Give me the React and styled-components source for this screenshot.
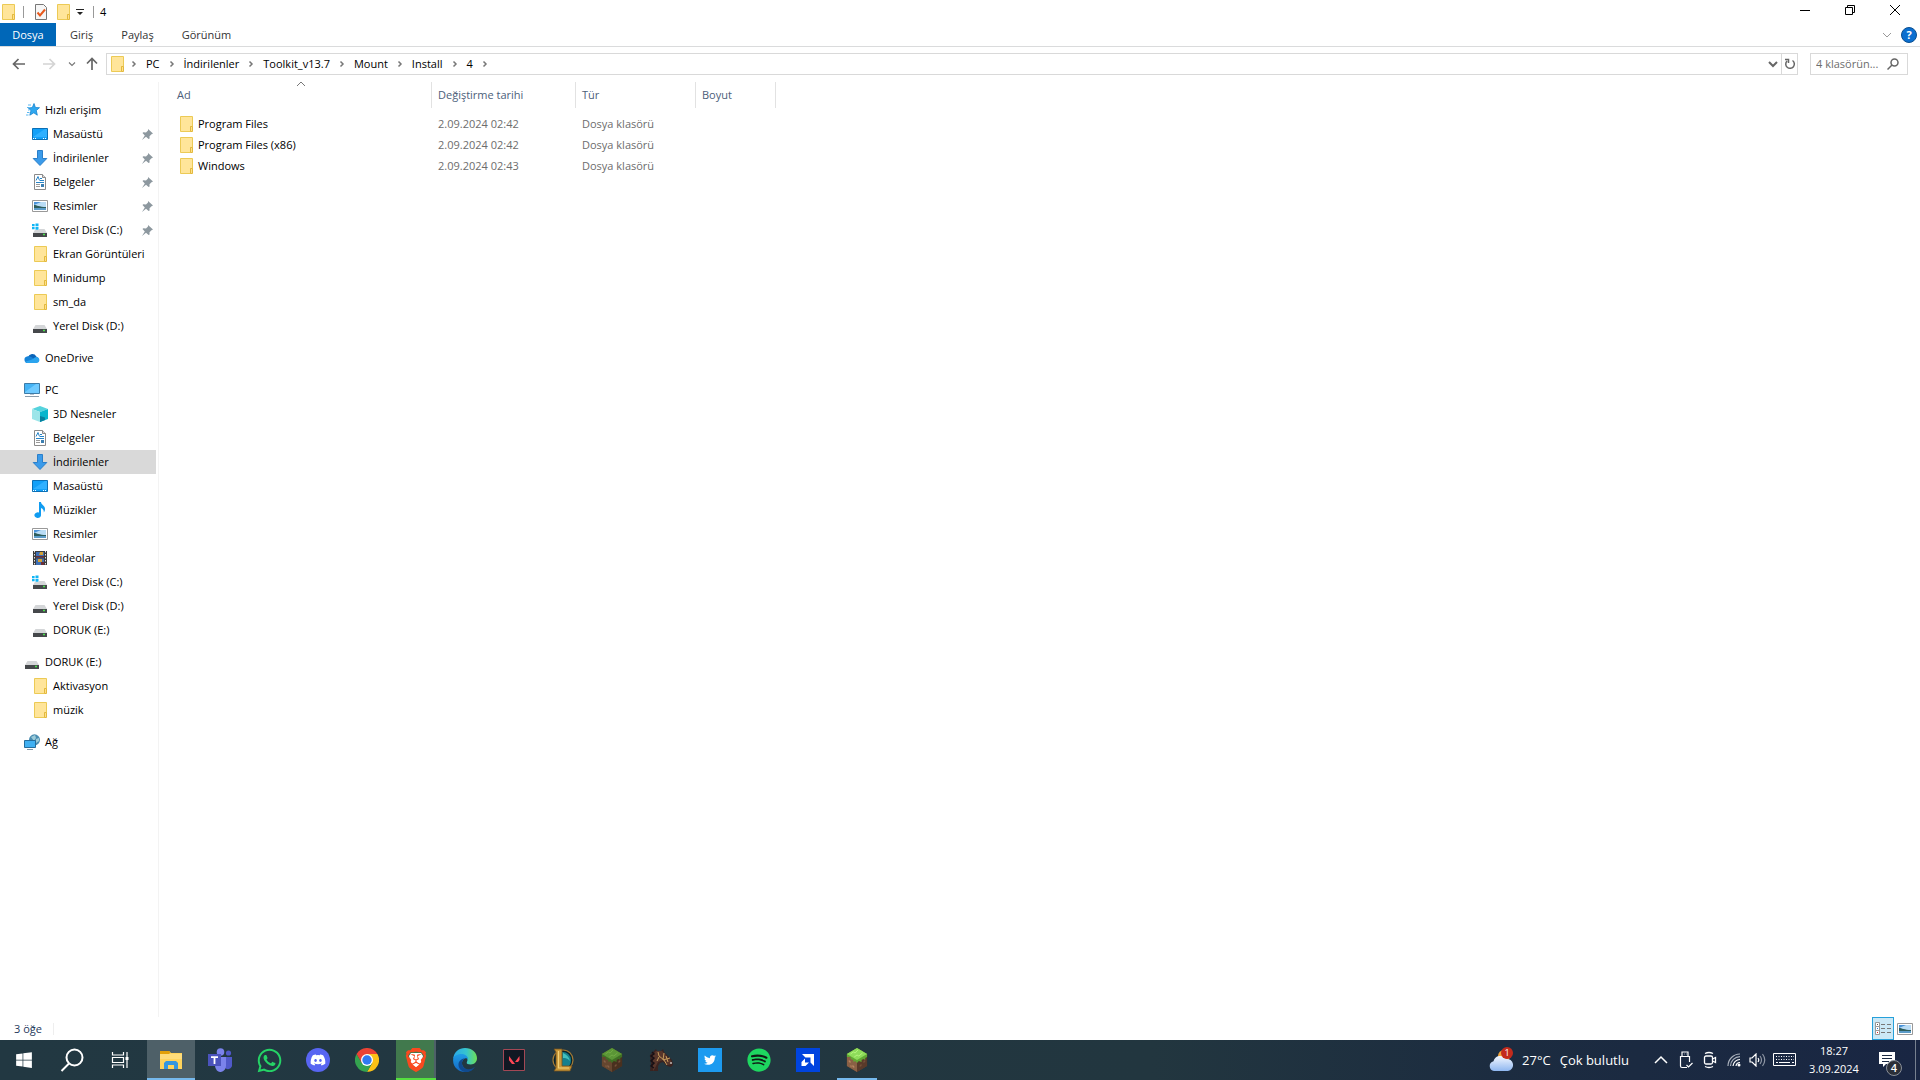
import React from "react";
import styled, { createGlobalStyle } from "styled-components";
import { FaWindows, FaWhatsapp, FaDiscord, FaSpotify, FaTwitter } from "react-icons/fa";
import { SiBrave } from "react-icons/si";

/* ---------- file icons ---------- */

const FolderIcon = () => (
  <svg width="16" height="16" viewBox="0 0 16 16">
    <path d="M2.5.5h12v10h-1.800v5H2.500z" fill="#ffe59a" stroke="#ecca55" />
    <path d="M12.500 10.500h2v5h-2z" fill="#ffe08a" stroke="#e3b93e" />
  </svg>
);

const StarIcon = () => (
  <svg width="16" height="16" viewBox="0 0 16 16">
    <path d="M10 1.500l1.400 4 4.100.2-3.200 2.800 1 4.700-3.500-2.400-4 2.400L7 8.600 4.300 6l4-.4z" fill="#2fa8f0" stroke="#1583cf" strokeWidth=".8" />
    <path d="M4 3h3M3 5.500h2M4 8h1.500M3 10.500h2.500M2 13h2.500" stroke="#5cb8f0" />
  </svg>
);

const DesktopIcon = () => (
  <svg width="16" height="16" viewBox="0 0 16 16">
    <path d="M.5 2.500h15v11H.5z" fill="#12a0f8" stroke="#0b6fb5" />
    <path d="M1 11L13 3h2v8z" fill="#2fb0ff" />
    <path d="M1 12.500h1M3 12.500h1M11 12.500h1M13 12.500h1" stroke="#fff" />
  </svg>
);

const DownloadIcon = () => (
  <svg width="16" height="16" viewBox="0 0 16 16">
    <path d="M5.500.5h5v8h4.300L8 15.500 1.200 8.500h4.300z" fill="#3b9bea" stroke="#2a7fca" />
  </svg>
);

const DocumentIcon = () => (
  <svg width="16" height="16" viewBox="0 0 16 16">
    <path d="M2.500.5h8l3 3v12h-11z" fill="#fff" stroke="#8a8a8a" />
    <path d="M10.500.5v3h3" fill="#ddd" stroke="#8a8a8a" />
    <path d="M4 6.500l2-4 1.500 4M8 4.500h2M8 6.500h4M4 8.500h8" stroke="#2784c7" fill="none" />
    <path d="M4 10.500h4M4 12.500h4" stroke="#999" />
    <path d="M9 10h3v3H9z" fill="#3c7fb1" />
  </svg>
);

const PictureIcon = () => (
  <svg width="16" height="16" viewBox="0 0 16 16">
    <path d="M.5 2.500h15v11H.5z" fill="#fff" stroke="#999" />
    <path d="M2 4h12v8H2z" fill="#b9dcf5" />
    <path d="M2 4h7L2 7z" fill="#4a92d8" />
    <path d="M2 7c3 0 5 2 12 2v1H2z" fill="#2d5d5c" />
    <path d="M2 10h12v2H2z" fill="#5b9bc8" />
  </svg>
);

const DriveIcon = ({ system }) => (
  <svg width="16" height="16" viewBox="0 0 16 16">
    <path d="M3.500 7h9L15 11H1z" fill="#d4d6d8" />
    <path d="M1 11h14v4H1z" fill="#45484b" />
    <path d="M11 12.500h2" stroke="#4be04b" strokeWidth="1.500" />
    {system && (
      <>
        <path d="M0 1h7v7H0z" fill="#fff" />
        <path d="M0 2h2.600v2.200H0zM3.500 1.500h3v2.700h-3zM0 5h2.600v2.200H0zM3.500 5h3v2.700h-3z" fill="#11b5f5" />
      </>
    )}
  </svg>
);

const SystemDriveIcon = () => <DriveIcon system />;

const CloudIcon = () => (
  <svg width="16" height="16" viewBox="0 0 16 16">
    <path d="M4 7a4.500 4.500 0 0 1 8.300-.6A3.500 3.500 0 0 1 12 13H4z" fill="#0a63b8" />
    <path d="M3 6.500c3-1 4.500 1 9 3.500l-8 3a3.300 3.300 0 0 1-1-6.500z" fill="#1683d8" />
    <path d="M8 9.500c2-1 3-2.600 5-2.400a3 3 0 0 1 0 5.900H3.500c-1 0-2-.5-2.500-1.200z" fill="#2ba4ee" />
  </svg>
);

const PcIcon = () => (
  <svg width="16" height="16" viewBox="0 0 16 16">
    <path d="M.5 1.500h15v10H.5z" fill="#45b3f5" stroke="#3d7ca8" />
    <path d="M1 10L12 2h3v9H1z" fill="#6fcaff" />
    <path d="M6 12h4v1H6z" fill="#b5c3cf" />
    <path d="M1 14.500h14" stroke="#8b9cab" />
  </svg>
);

const CubeIcon = () => (
  <svg width="16" height="16" viewBox="0 0 16 16">
    <path d="M0 3l8-3 8 3-8 3z" fill="#55d3dd" />
    <path d="M0 3l8 3v10l-8-3z" fill="#9ce5e9" />
    <path d="M16 3L8 6v10l8-3z" fill="#08b5cd" />
    <path d="M8 10l5 1.500v2.500l-5 2z" fill="#087f9d" />
  </svg>
);

const MusicIcon = () => (
  <svg width="16" height="16" viewBox="0 0 16 16">
    <path d="M7 0h2c0 3 4 3.500 4 7 0 1.500-.5 2.500-1.200 3.500.2-2.500-1-3.700-2.800-4.500v7a3.300 2.800 0 1 1-2-2.400z" fill="#109cf1" />
  </svg>
);

const VideoIcon = () => (
  <svg width="16" height="16" viewBox="0 0 16 16">
    <path d="M1 1h14v14H1z" fill="#3b3b3b" />
    <path d="M2.500 1v14M13.500 1v14" stroke="#e5e5e5" strokeDasharray="1.500 1.500" />
    <path d="M4 2h8v5.500H4zM4 8.500h8V15H4z" fill="#3e6fb4" />
    <path d="M8 2h3v3H7zM6 9h4v3H6z" fill="#d5a235" />
    <path d="M4 6h8v1.500H4zM9 12h3v3H9z" fill="#6b2f38" />
  </svg>
);

const NetworkIcon = () => (
  <svg width="16" height="16" viewBox="0 0 16 16">
    <circle cx="10.500" cy="5.800" r="5.500" fill="#4a8db1" />
    <path d="M7 3l4-2 1 3-2 3zM12 5l3-1v3l-3 2z" fill="#9ccbd8" />
    <path d="M.5 6.500h11v7H.5z" fill="#40b0f2" stroke="#246d9c" />
    <path d="M3 15.500h6" stroke="#7f97a8" />
  </svg>
);

const PinIcon = () => (
  <svg width="11" height="11" viewBox="0 0 11 11">
    <path d="M6 0l5 4.500-1.500.7-2 2 .1 2.300-1 .5L4 7.800 0 11l2.800-4.500L.5 4l.8-.8 2.700.2 2-2z" fill="#8d989f" />
  </svg>
);

const Chevron = ({ dir = "right", size = 8, color = "#777", weight = 1.5 }) => {
  const paths = { right: "M2.500 1.500L5 4 2.500 6.500", down: "M0 2l4 4 4-4", up: "M0 6l4-4 4 4" };
  return (
    <svg width={size} height={size} viewBox="0 0 8 8" overflow="visible">
      <path d={paths[dir]} fill="none" stroke={color} strokeWidth={weight} />
    </svg>
  );
};

const ArrowIcon = ({ turn = 0, color = "#666" }) => (
  <svg width="14" height="14" viewBox="0 0 14 14">
    <path d="M13 7H2M6.500 2L1.500 7l5 5" transform={`rotate(${turn} 7 7)`} fill="none" stroke={color} strokeWidth="1.700" />
  </svg>
);

/* ---------- taskbar icons ---------- */

const SearchIcon = () => (
  <svg width="24" height="24" viewBox="0 0 24 24" fill="none" stroke="#fff" strokeWidth="2">
    <circle cx="14.500" cy="9.500" r="8" />
    <path d="M9 15.500L1.500 23" />
  </svg>
);

const TaskViewIcon = () => (
  <svg width="18" height="18" viewBox="0 0 18 18" fill="none" stroke="#fff" strokeWidth="1.200">
    <path d="M1.500 1v3h11V1M1.500 17v-3h11v3M1.500 6.500h11v5h-11zM16 1v16" />
    <path d="M14.500 6h3v3h-3z" fill="#fff" stroke="none" />
  </svg>
);

const ExplorerIcon = () => (
  <svg width="24" height="24" viewBox="0 0 24 24">
    <path d="M1 3h9l2 2h11v16H1z" fill="#ffd35c" />
    <path d="M1 3h9l1.500 1.500L10 6H1z" fill="#e3a008" />
    <path d="M1 6h22v5H1z" fill="#ffdc7a" />
    <path d="M5 21v-6l2-2h10l2 2v6h-4v-4H9v4z" fill="#3596df" />
  </svg>
);

const TeamsIcon = () => (
  <svg width="24" height="24" viewBox="0 0 24 24">
    <circle cx="12.500" cy="4" r="3.800" fill="#7b83eb" />
    <circle cx="20.500" cy="5" r="2.600" fill="#5059c9" />
    <path d="M15 9h9v7a4 4 0 0 1-8 2z" fill="#5059c9" />
    <path d="M7 9h11v8a5.500 6.500 0 0 1-11 1z" fill="#7b83eb" />
    <path d="M0 6h13v12H0z" fill="#4b53bc" />
    <path d="M3 9.200h7M6.500 9v7" stroke="#fff" strokeWidth="1.800" />
  </svg>
);

const WhatsAppIcon = () => <FaWhatsapp size={27} color="#25d366" />;

const ChromeIcon = () => (
  <svg width="24" height="24" viewBox="0 0 24 24">
    <path d="M12 12V6h10.400A12 12 0 0 1 12 24l5.200-9z" fill="#fbc116" />
    <path d="M12 12L6.800 15 1.600 6A12 12 0 0 0 12 24l5.200-9z" fill="#34a34f" />
    <path d="M12 6H22.400A12 12 0 0 0 1.600 6l5.200 9z" fill="#ea4335" />
    <circle cx="12" cy="12" r="6" fill="#fff" />
    <circle cx="12" cy="12" r="4.700" fill="#307af0" />
  </svg>
);

const BraveIcon = () => (
  <svg width="24" height="24" viewBox="0 0 24 24">
    <path d="M7 5h10l2 3-2 9-5 4-5-4-2-9z" fill="#fff" />
    <SiBrave size={24} color="#f9491f" />
  </svg>
);

const EdgeIcon = () => (
  <svg width="24" height="24" viewBox="0 0 24 24">
    <defs>
      <linearGradient id="edgeTop" x1="0" x2="1">
        <stop offset="0" stopColor="#2aa8e8" />
        <stop offset=".55" stopColor="#36c4cf" />
        <stop offset="1" stopColor="#6ddf55" />
      </linearGradient>
      <linearGradient id="edgeLeft" x1="0" x2="0" y1="0" y2="1">
        <stop offset="0" stopColor="#1f9de6" />
        <stop offset="1" stopColor="#1468c4" />
      </linearGradient>
    </defs>
    <path d="M.2 10.500C1 4 6 0 12 0c7 0 12 4.700 12 10.300 0 3.700-2.700 6.200-6.200 6.200-2.800 0-4.600-1-4-2.300 2-3-.3-6.700-4.500-6.700C5 7.500 1 9 .2 10.500z" fill="url(#edgeTop)" />
    <path d="M.2 10.500C1 7.500 4.700 6 8.500 6c4.500 0 6.800 3 6.500 5.500-1-1.300-2-1.500-3-1-3 1.500-4 5-2 8 2 2.800 4 4 6.500 4.500C9 26-1 21 .2 10.500z" fill="url(#edgeLeft)" />
    <path d="M12 10.500c-3 1.500-4 5-2 8 2.500 3.700 8 3.500 12 .2-2.500 4.500-6.500 5.600-10 5.300-4-.5-6.800-4-6.500-8 .2-3 3-5.500 6.500-5.500z" fill="#104a8e" />
  </svg>
);

const ValorantIcon = () => (
  <svg width="22" height="22" viewBox="0 0 22 22">
    <path d="M.5.5h21v21H.5z" fill="#111823" stroke="#a34855" />
    <path d="M6 7l6 8H9l-3-3.800zM16.500 7v4L15 13h-3z" fill="#ff4655" />
  </svg>
);

const LeagueIcon = () => (
  <svg width="24" height="24" viewBox="0 0 24 24">
    <circle cx="12" cy="12" r="10" fill="#07232d" stroke="#a47a34" strokeWidth="1.200" />
    <path d="M11 4a8 8 0 0 1 9 8c0 3-1 5-2 6h-7z" fill="#14808d" />
    <path d="M12 5c4 2 6 4 7 8-3-3-4-3-7-3z" fill="#43c0bd" />
    <path d="M3 1h8v17h10l-2 5H3l2-3V4z" fill="#c99737" stroke="#73501e" strokeWidth=".8" />
    <path d="M7.500 3v17H18" fill="none" stroke="#f2d178" strokeWidth="1.200" />
  </svg>
);

const BlockIcon = ({ bright }) => (
  <svg width="22" height="24" viewBox="0 0 24 24" preserveAspectRatio="none">
    <path d="M1 6l11-6 11 6v12l-11 6-11-6z" fill="#5c3e2d" />
    <path d="M1 6l11 6v12L1 18z" fill={bright ? "#8a6045" : "#65462f"} />
    <path d="M23 6l-11 6v12l11-6z" fill={bright ? "#593a2a" : "#49301f"} />
    <path d="M1 6l11-6 11 6v3l-2 1v2l-2-1-2 1v2l-3-1-2 2-2-2-2 1v-2l-3-1v-2L1 9z" fill={bright ? "#61a834" : "#3f6f24"} />
    <path d="M1 6l11-6 11 6-11 6z" fill={bright ? "#8edb5a" : "#5b9636"} />
    <path d="M5 6l3-2 2 1 3-3M9 9l3-2 2 1 4-3" stroke={bright ? "#b6f47e" : "#71ab46"} fill="none" />
    <path d="M3 12l2 1v2l-2-1zM7 17l2 1v2l-2-1zM5 17l1 .5v2l-1-.5z" fill={bright ? "#b98563" : "#866047"} />
    <path d="M15 17l2-1v2l-2 1zM19 13l2-1v2l-2 1z" fill="#765039" />
  </svg>
);

const BrightBlockIcon = () => <BlockIcon bright />;

const HorseIcon = () => (
  <svg width="24" height="24" viewBox="0 0 24 24">
    <path d="M1 23l1-7-1-9 4-4 2-2 1 2h4l2-2 1 3 4 4 4 4 1 5-2 2-4-1-4-4-3 1-2 3v5z" fill="#3a2320" />
    <path d="M4 6l3-3h6l3 3 6 7v3l-3 1-5-5-5 2-3 6-2 3z" fill="#58362b" />
    <path d="M3 4l2 2-3 2 3 2-3 3 3 2-3 3 3 2" fill="none" stroke="#181015" strokeWidth="1.500" />
    <path d="M9 4l1 4 5 4 3 5M15 5l-1 7M10 9l-2 4M14 12l7-2M17 8l2 6" fill="none" stroke="#c49b5c" />
    <path d="M21 14h2v2h-2z" fill="#a39490" />
  </svg>
);

const DiscordIcon = () => (
  <svg width="24" height="24" viewBox="0 0 24 24">
    <circle cx="12" cy="12" r="12" fill="#5865f2" />
    <FaDiscord x="4" y="4" size={16} color="#fff" />
  </svg>
);

const TwitterIcon = () => (
  <svg width="24" height="24" viewBox="0 0 24 24">
    <path d="M0 0h24v24H0z" fill="#1d9bf0" />
    <FaTwitter x="6" y="6" size={12} color="#fff" />
  </svg>
);

const SpotifyIcon = () => (
  <svg width="24" height="24" viewBox="0 0 24 24">
    <circle cx="12" cy="12" r="11" fill="#101b15" />
    <FaSpotify size={24} color="#1ed760" />
  </svg>
);

const AmdIcon = () => (
  <svg width="24" height="24" viewBox="0 0 24 24">
    <path d="M0 0h24v24H0z" fill="#0044df" />
    <path d="M6 6h12v12l-3.500-3.500v-5h-5z" fill="#fff" />
    <path d="M9 10.500v4h4L9.500 18H5.500v-4z" fill="#fff" />
  </svg>
);

const WeatherIcon = () => (
  <svg width="24" height="24" viewBox="0 0 24 24">
    <defs>
      <linearGradient id="cloud" x1="0" x2="0" y1="0" y2="1">
        <stop offset="0" stopColor="#f3f7ff" />
        <stop offset="1" stopColor="#8fb7f0" />
      </linearGradient>
    </defs>
    <circle cx="15" cy="8" r="6" fill="#f3a43b" />
    <path d="M5 23a5 5 0 0 1-.5-9.800A7 7 0 0 1 17 11a6 6 0 0 1 2 12z" fill="url(#cloud)" />
  </svg>
);

const UsbIcon = () => (
  <svg width="14" height="18" viewBox="0 0 14 18" fill="none" stroke="#fff" strokeWidth="1.200">
    <path d="M3 5V1h6v4M5 3h.5M7 3h.5M8 16.500H3a1.500 1.500 0 0 1-1.500-1.500V5.500h9V11M7.500 14l2 2 4-4" />
  </svg>
);

const MeetIcon = () => (
  <svg width="14" height="18" viewBox="0 0 14 18" fill="none" stroke="#fff" strokeWidth="1.300">
    <rect x="1.500" y="5" width="8" height="8" rx="1.500" />
    <path d="M9.500 8l3-1.500v5l-3-1.500M2 2.500q4-2 8 0M2 15.500q4 2 8 0" />
  </svg>
);

const WifiIcon = () => (
  <svg width="14" height="14" viewBox="0 0 14 14" fill="none" stroke="#fff" strokeWidth="1.200">
    <path d="M9 13a4 4 0 0 1 4-3.500M6 13a7 7 0 0 1 7-6.500" />
    <path d="M3.500 13A9.500 9.500 0 0 1 13 3.700M1 13A12 12 0 0 1 13 1" stroke="#aab1bc" />
    <circle cx="12" cy="12" r="1.500" fill="#fff" stroke="none" />
  </svg>
);

const SoundIcon = () => (
  <svg width="17" height="14" viewBox="0 0 17 14" fill="none" stroke="#fff" strokeWidth="1.200">
    <path d="M1 5h2l4-4v12L3 9H1zM9 5q1.500 2 0 4" />
    <path d="M11 3q3 4 0 8M13.500 1q4.500 6 0 12" stroke="#8d95a3" />
  </svg>
);

const KeyboardIcon = () => (
  <svg width="24" height="14" viewBox="0 0 24 14" fill="none" stroke="#fff">
    <path d="M.5.5h22v12H.5z" />
    <path d="M3 3.500h18M3 6.500h18" strokeDasharray="1 1.500" />
    <path d="M3 9.500h2M6 9.500h11M19 9.500h2" />
  </svg>
);

const NotesIcon = () => (
  <svg width="16" height="16" viewBox="0 0 16 16">
    <path d="M0 0h16v12H7l-3 3v-3H0z" fill="#fff" />
    <path d="M3 3.500h10M3 6.500h10M3 9.500h7" stroke="#1b2942" />
  </svg>
);

/* ---------- data ---------- */

const crumbs = ["PC", "İndirilenler", "Toolkit_v13.7", "Mount", "Install", "4"];

const groups = [
  {
    name: "Hızlı erişim",
    icon: StarIcon,
    items: [
      { name: "Masaüstü", icon: DesktopIcon, pinned: true },
      { name: "İndirilenler", icon: DownloadIcon, pinned: true },
      { name: "Belgeler", icon: DocumentIcon, pinned: true },
      { name: "Resimler", icon: PictureIcon, pinned: true },
      { name: "Yerel Disk (C:)", icon: SystemDriveIcon, pinned: true },
      { name: "Ekran Görüntüleri", icon: FolderIcon },
      { name: "Minidump", icon: FolderIcon },
      { name: "sm_da", icon: FolderIcon },
      { name: "Yerel Disk (D:)", icon: DriveIcon },
    ],
  },
  { name: "OneDrive", icon: CloudIcon, items: [] },
  {
    name: "PC",
    icon: PcIcon,
    items: [
      { name: "3D Nesneler", icon: CubeIcon },
      { name: "Belgeler", icon: DocumentIcon },
      { name: "İndirilenler", icon: DownloadIcon, selected: true },
      { name: "Masaüstü", icon: DesktopIcon },
      { name: "Müzikler", icon: MusicIcon },
      { name: "Resimler", icon: PictureIcon },
      { name: "Videolar", icon: VideoIcon },
      { name: "Yerel Disk (C:)", icon: SystemDriveIcon },
      { name: "Yerel Disk (D:)", icon: DriveIcon },
      { name: "DORUK (E:)", icon: DriveIcon },
    ],
  },
  {
    name: "DORUK (E:)",
    icon: DriveIcon,
    items: [
      { name: "Aktivasyon", icon: FolderIcon },
      { name: "müzik", icon: FolderIcon },
    ],
  },
  { name: "Ağ", icon: NetworkIcon, items: [] },
];

const files = [
  { name: "Program Files", date: "2.09.2024 02:42" },
  { name: "Program Files (x86)", date: "2.09.2024 02:42" },
  { name: "Windows", date: "2.09.2024 02:43" },
];

const apps = [
  { name: "Dosya Gezgini", icon: ExplorerIcon, state: "active" },
  { name: "Teams", icon: TeamsIcon },
  { name: "WhatsApp", icon: WhatsAppIcon },
  { name: "Discord", icon: DiscordIcon },
  { name: "Chrome", icon: ChromeIcon },
  { name: "Brave", icon: BraveIcon, state: "progress" },
  { name: "Edge", icon: EdgeIcon },
  { name: "Valorant", icon: ValorantIcon },
  { name: "League of Legends", icon: LeagueIcon },
  { name: "Minecraft Launcher", icon: BlockIcon },
  { name: "Mount & Blade", icon: HorseIcon },
  { name: "Twitter", icon: TwitterIcon },
  { name: "Spotify", icon: SpotifyIcon },
  { name: "AMD Software", icon: AmdIcon },
  { name: "Minecraft", icon: BrightBlockIcon, state: "open" },
];

/* ---------- page ---------- */

const App = () => (
  <>
    <GlobalStyle />
    <Screen>
      <TitleBar>
        <FolderIcon />
        <TitleDivider />
        <ToolButton aria-label="Özellikler">
          <svg width="14" height="16" viewBox="0 0 14 16">
            <path d="M1.500.5h8l3 3v12h-11z" fill="#f6f6f6" stroke="#777" />
            <path d="M3.500 8.500l2.500 3 5-6" fill="none" stroke="#e8591c" strokeWidth="2" />
          </svg>
        </ToolButton>
        <ToolButton aria-label="Yeni klasör">
          <FolderIcon />
        </ToolButton>
        <CaretButton aria-label="Özelleştir">
          <svg width="8" height="8" viewBox="0 0 8 8">
            <path d="M0 1h8v1H0zM1 4h6L4 7z" fill="#222" />
          </svg>
        </CaretButton>
        <TitleDivider />
        <Title>4</Title>
        <WindowButtons>
          <WindowButton aria-label="Simge durumuna küçült">
            <svg width="10" height="10"><path d="M0 5.500h10" stroke="#000" /></svg>
          </WindowButton>
          <WindowButton aria-label="Önceki boyut">
            <svg width="10" height="10" fill="none" stroke="#000"><path d="M.5 2.500h7v7h-7zM2.500 2.500v-2h7v7h-2" /></svg>
          </WindowButton>
          <WindowButton aria-label="Kapat">
            <svg width="10" height="10" stroke="#000"><path d="M0 0l10 10M10 0L0 10" /></svg>
          </WindowButton>
        </WindowButtons>
      </TitleBar>

      <Ribbon>
        <FileTab>Dosya</FileTab>
        <Tab>Giriş</Tab>
        <Tab>Paylaş</Tab>
        <Tab>Görünüm</Tab>
        <RibbonEnd>
          <ToolButton aria-label="Şeridi genişlet">
            <Chevron dir="down" color="#999" weight={1} />
          </ToolButton>
          <HelpButton>?</HelpButton>
        </RibbonEnd>
      </Ribbon>

      <NavBar>
        <NavButton $width={30} aria-label="Geri"><ArrowIcon /></NavButton>
        <NavButton $width={30} aria-label="İleri"><ArrowIcon turn={180} color="#d4d4d4" /></NavButton>
        <NavButton $width={16} aria-label="Son konumlar"><Chevron dir="down" size={6} /></NavButton>
        <NavButton $width={24} aria-label="Yukarı"><ArrowIcon turn={90} /></NavButton>
        <Address>
          <FolderIcon />
          <Crumbs>
            <Chevron />
            {crumbs.map((crumb) => (
              <React.Fragment key={crumb}>
                <Crumb>{crumb}</Crumb>
                <Chevron />
              </React.Fragment>
            ))}
          </Crumbs>
          <AddressButton aria-label="Önceki konumlar">
            <Chevron dir="down" color="#666" weight={2} />
          </AddressButton>
          <RefreshButton aria-label="Yenile">
            <svg width="12" height="12" viewBox="0 0 12 12" fill="none" stroke="#666" strokeWidth="1.500">
              <path d="M8.500 2.500A4.300 4.300 0 1 1 3 3M1 1.500h3.500V5" />
            </svg>
          </RefreshButton>
        </Address>
        <SearchBox>
          <SearchInput aria-label="Ara" placeholder="4 klasörün..." />
          <svg width="12" height="12" viewBox="0 0 12 12" fill="none" stroke="#666" strokeWidth="1.500">
            <circle cx="7.500" cy="4.500" r="3.500" />
            <path d="M5 7L.5 11.500" />
          </svg>
        </SearchBox>
      </NavBar>

      <Body>
        <Sidebar>
          {groups.map(({ name, icon: Icon, items }) => (
            <Group key={name}>
              <TreeItem $level={0}>
                <Icon />
                {name}
              </TreeItem>
              {items.map(({ name: label, icon: ItemIcon, pinned, selected }) => (
                <TreeItem key={label} $level={1} $selected={selected}>
                  <ItemIcon />
                  <TreeLabel>{label}</TreeLabel>
                  {pinned && <PinIcon />}
                </TreeItem>
              ))}
            </Group>
          ))}
        </Sidebar>
        <Content>
          <FileTable>
            <colgroup>
              <Col $width={261} />
              <Col $width={144} />
              <Col $width={120} />
              <Col $width={80} />
            </colgroup>
            <thead>
              <tr>
                <HeadCell>
                  Ad
                  <SortMark><Chevron dir="up" weight={1} /></SortMark>
                </HeadCell>
                <HeadCell>Değiştirme tarihi</HeadCell>
                <HeadCell>Tür</HeadCell>
                <HeadCell>Boyut</HeadCell>
              </tr>
            </thead>
            <tbody>
              <SpacerRow><td colSpan={4} /></SpacerRow>
              {files.map((file) => (
                <tr key={file.name}>
                  <Cell>
                    <FileName>
                      <FolderIcon />
                      {file.name}
                    </FileName>
                  </Cell>
                  <Cell>{file.date}</Cell>
                  <Cell>Dosya klasörü</Cell>
                  <Cell />
                </tr>
              ))}
            </tbody>
          </FileTable>
        </Content>
      </Body>

      <StatusBar>
        <StatusText>3 öğe</StatusText>
        <ViewButton $on aria-label="Ayrıntılar">
          <svg width="16" height="14" viewBox="0 0 16 14">
            <path d="M.5.5h4v4h-4zM.5 4.500h4v4h-4zM.5 8.500h4v4h-4z" fill="#fff" stroke="#999" />
            <path d="M2 2h1v1H2z" fill="#555" />
            <path d="M2 6h1v1H2z" fill="#2a78d0" />
            <path d="M2 10h1v1H2z" fill="#e02020" />
            <path d="M6 2.500h4M12 2.500h4M6 6.500h4M12 6.500h4M6 10.500h4M12 10.500h4" stroke="#777" />
          </svg>
        </ViewButton>
        <ViewButton aria-label="Büyük simgeler">
          <PictureIcon />
        </ViewButton>
      </StatusBar>

      <Taskbar>
        <TaskButton aria-label="Başlat"><FaWindows size={18} color="#fff" /></TaskButton>
        <TaskButton aria-label="Ara"><SearchIcon /></TaskButton>
        <TaskButton aria-label="Görev görünümü"><TaskViewIcon /></TaskButton>
        <Apps>
          {apps.map(({ name, icon: Icon, state }) => (
            <TaskButton key={name} aria-label={name} $state={state}>
              <Icon />
            </TaskButton>
          ))}
        </Apps>
        <Tray>
          <Weather>
            <WeatherBox>
              <WeatherIcon />
              <AlertBadge>1</AlertBadge>
            </WeatherBox>
            <span>27°C</span>
            <span>Çok bulutlu</span>
          </Weather>
          <TrayButton $width={26} aria-label="Gizli simgeler">
            <Chevron dir="up" size={12} color="#fff" weight={1} />
          </TrayButton>
          <TrayButton $width={24} aria-label="USB"><UsbIcon /></TrayButton>
          <TrayButton $width={24} aria-label="Şimdi Toplantı Yap"><MeetIcon /></TrayButton>
          <TrayButton $width={24} aria-label="Ağ"><WifiIcon /></TrayButton>
          <TrayButton $width={22} aria-label="Ses"><SoundIcon /></TrayButton>
          <TrayButton $width={34} aria-label="Klavye"><KeyboardIcon /></TrayButton>
          <Clock>
            <span>18:27</span>
            <span>3.09.2024</span>
          </Clock>
          <Notifications aria-label="Bildirimler">
            <NotesIcon />
            <CountBadge>4</CountBadge>
          </Notifications>
          <ShowDesktop aria-label="Masaüstünü göster" />
        </Tray>
      </Taskbar>
    </Screen>
  </>
);

export default App;

const GlobalStyle = createGlobalStyle`
  * {
    box-sizing: border-box;
  }

  body {
    margin: 0;
    background: #fff;
    color: #000;
    font-family: "Open Sans", "Noto Sans", sans-serif;
    font-size: 11px;
    line-height: 16px;
  }

  button,
  input {
    padding: 0;
    border: none;
    background: none;
    color: inherit;
    font: inherit;
  }

  svg {
    display: block;
    flex-shrink: 0;
  }
`;

const Screen = styled.div`
  display: flex;
  flex-direction: column;
  height: 100vh;
  overflow: hidden;
`;

const TitleBar = styled.header`
  display: flex;
  align-items: center;
  height: 23px;
`;

const TitleDivider = styled.span`
  width: 1px;
  height: 12px;
  margin: 0 6px 0 7px;
  background: #999;
`;

const ToolButton = styled.button`
  display: flex;
  align-items: center;
  justify-content: center;
  min-width: 22px;
  height: 22px;
`;

const CaretButton = styled(ToolButton)`
  min-width: 12px;
`;

const Title = styled.span`
  font-size: 11px;
`;

const WindowButtons = styled.div`
  display: flex;
  align-self: flex-start;
  margin-left: auto;
  padding-right: 3px;
`;

const WindowButton = styled.button`
  display: flex;
  align-items: center;
  justify-content: center;
  width: 45px;
  height: 20px;
`;

const Ribbon = styled.nav`
  display: flex;
  align-items: center;
  height: 24px;
  border-bottom: 1px solid #dadbdc;
`;

const Tab = styled.button`
  height: 23px;
  padding: 0 14px;
  color: #333;
`;

const FileTab = styled(Tab)`
  width: 56px;
  padding: 0;
  background: #0067b8;
  color: #fff;
`;

const RibbonEnd = styled.div`
  display: flex;
  align-items: center;
  gap: 3px;
  margin-left: auto;
  padding-right: 3px;
`;

const HelpButton = styled.button`
  width: 16px;
  height: 16px;
  border: 1px solid #0a4f91;
  border-radius: 50%;
  background: #0b6fd0;
  color: #fff;
  font-weight: 700;
  line-height: 14px;
`;

const NavBar = styled.div`
  display: flex;
  align-items: center;
  height: 35px;
  padding: 0 12px 1px 4px;
`;

const NavButton = styled.button`
  display: flex;
  align-items: center;
  justify-content: center;
  width: ${(props) => props.$width}px;
  height: 22px;
`;

const Address = styled.div`
  display: flex;
  flex: 1;
  align-items: center;
  height: 22px;
  margin-left: 2px;
  padding-left: 2px;
  border: 1px solid #d9d9d9;
`;

const Crumbs = styled.div`
  display: flex;
  flex: 1;
  align-items: center;
  gap: 8px;
  padding-left: 5px;
`;

const Crumb = styled.button`
  height: 20px;
`;

const AddressButton = styled.button`
  display: flex;
  align-items: center;
  justify-content: center;
  width: 16px;
  height: 20px;
`;

const RefreshButton = styled(AddressButton)`
  border-left: 1px solid #d9d9d9;
`;

const SearchBox = styled.div`
  display: flex;
  align-items: center;
  width: 98px;
  height: 22px;
  margin-left: 12px;
  padding: 0 8px 0 5px;
  border: 1px solid #d9d9d9;
`;

const SearchInput = styled.input`
  flex: 1;
  min-width: 0;
  outline: none;

  &::placeholder {
    color: #6d6d6d;
  }
`;

const Body = styled.main`
  display: flex;
  flex: 1;
  min-height: 0;
`;

const Sidebar = styled.nav`
  width: 159px;
  padding: 16px 2px 0 0;
  border-right: 1px solid #f3f3f3;
`;

const Group = styled.div`
  margin-bottom: 8px;
`;

const TreeItem = styled.button`
  display: flex;
  align-items: center;
  gap: 5px;
  width: 100%;
  height: 24px;
  padding: 0 3px 0 ${(props) => (props.$level ? "32px" : "24px")};
  background: ${(props) => (props.$selected ? "#d9d9d9" : "transparent")};
  text-align: left;
  white-space: nowrap;
`;

const TreeLabel = styled.span`
  flex: 1;
`;

const Content = styled.section`
  flex: 1;
  padding-left: 12px;
`;

const FileTable = styled.table`
  width: 605px;
  border-spacing: 0;
  table-layout: fixed;
`;

const Col = styled.col`
  width: ${(props) => props.$width}px;
`;

const HeadCell = styled.th`
  position: relative;
  height: 26px;
  padding: 0 6px;
  border-right: 1px solid #e2e2e2;
  color: #4c607a;
  font-weight: 400;
  text-align: left;
`;

const SortMark = styled.span`
  position: absolute;
  top: -2px;
  left: calc(50% - 4px);
`;

const SpacerRow = styled.tr`
  height: 5px;

  td {
    padding: 0;
  }
`;

const Cell = styled.td`
  height: 21px;
  padding: 0 6px;
  color: #6d6d6d;
`;

const FileName = styled.span`
  display: flex;
  align-items: center;
  gap: 4px;
  padding-left: 1px;
  color: #000;
`;

const StatusBar = styled.footer`
  display: flex;
  align-items: center;
  height: 23px;
  padding-right: 4px;
`;

const StatusText = styled.span`
  width: 54px;
  margin-right: auto;
  padding-left: 14px;
  border-right: 1px solid #eee;
  color: #1e395b;
  line-height: 12px;
`;

const ViewButton = styled.button`
  display: flex;
  align-items: center;
  justify-content: center;
  width: 22px;
  height: 23px;
  border: 1px solid ${(props) => (props.$on ? "#26a0da" : "transparent")};
  background: ${(props) => (props.$on ? "#cbe8f6" : "transparent")};
`;

const Taskbar = styled.footer`
  display: flex;
  height: 40px;
  background: linear-gradient(90deg, #223842, #22363f 60%, #1c2c40 78%, #192643);
  color: #fff;
`;

const Apps = styled.div`
  display: flex;
  gap: 1px;
  margin-left: 3px;
`;

const taskFill = {
  active: "#4e6068",
  progress: "linear-gradient(90deg, transparent 4px, #41794d 4px, #41794d 42px, #4e6068 42px, #4e6068 44px, transparent 44px)",
};

const TaskButton = styled.button`
  display: flex;
  position: relative;
  align-items: center;
  justify-content: center;
  width: 48px;
  height: 40px;
  background: ${(props) => taskFill[props.$state] || "transparent"};

  &::after {
    content: "";
    display: ${(props) => (props.$state ? "block" : "none")};
    position: absolute;
    right: ${(props) => (props.$state === "active" ? 0 : "4px")};
    bottom: 0;
    left: ${(props) => (props.$state === "active" ? 0 : "4px")};
    height: 2px;
    background: ${(props) => (props.$state === "progress" ? "#55e03f" : "#76b9ed")};
  }
`;

const Tray = styled.div`
  display: flex;
  align-items: center;
  margin-left: auto;
`;

const Weather = styled.button`
  display: flex;
  align-items: center;
  gap: 9px;
  margin-right: 19px;
  font-size: 13px;
`;

const WeatherBox = styled.span`
  position: relative;
`;

const AlertBadge = styled.span`
  position: absolute;
  top: -1px;
  right: 0;
  width: 12px;
  height: 12px;
  border-radius: 50%;
  background: #c42b1c;
  font-size: 9px;
  line-height: 12px;
  text-align: center;
`;

const TrayButton = styled.button`
  display: flex;
  align-items: center;
  justify-content: center;
  width: ${(props) => props.$width}px;
  height: 40px;
`;

const Clock = styled.div`
  display: flex;
  flex-direction: column;
  align-items: center;
  width: 64px;
  line-height: 18px;
`;

const Notifications = styled.button`
  position: relative;
  width: 49px;
  padding-left: 13px;
`;

const CountBadge = styled.span`
  position: absolute;
  top: 8px;
  left: 20px;
  width: 16px;
  height: 16px;
  border: 1px solid #8a9099;
  border-radius: 50%;
  background: #2b2f38;
  line-height: 14px;
  font-weight: 600;
`;

const ShowDesktop = styled.button`
  width: 5px;
  height: 40px;
  border-left: 1px solid #76808f;
`;
